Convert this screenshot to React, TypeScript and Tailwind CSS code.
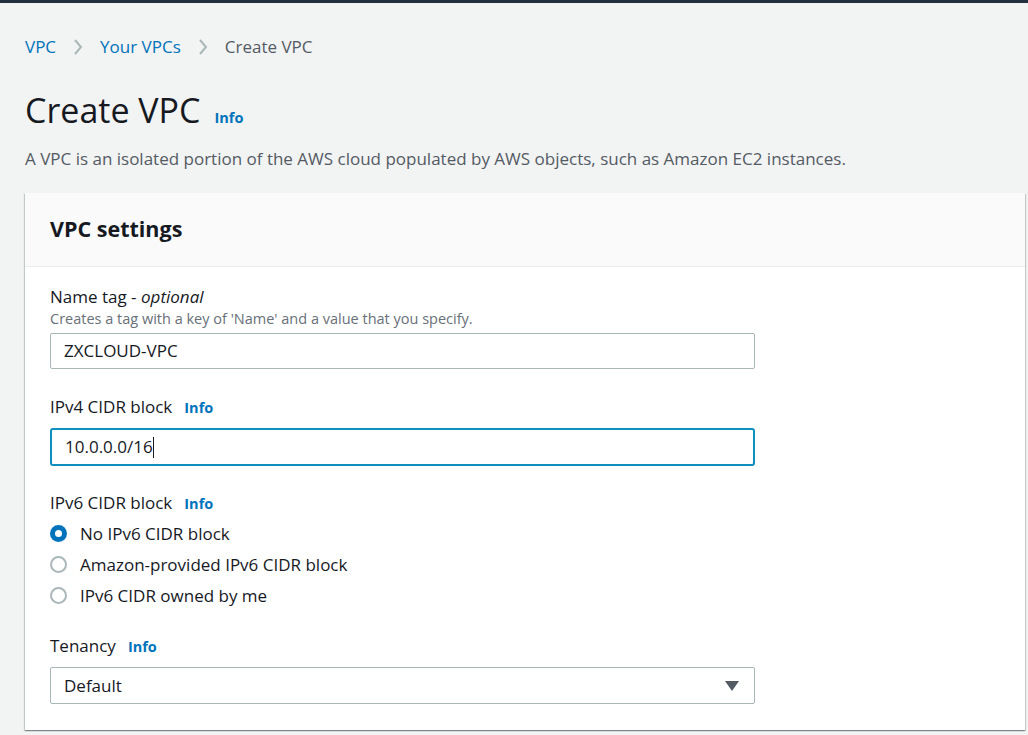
import React from 'react';

const InfoLink = ({ className = '' }: { className?: string }) => (
    <span className={`text-[14.5px] font-bold text-[#0073bb] ${className}`}>Info</span>
);

const Chevron = () => (
    <svg width="10" height="18" viewBox="0 0 10 18" className="mx-[17px]">
        <path d="M2 2 L8 9 L2 16" fill="none" stroke="#aab7b8" strokeWidth="2" />
    </svg>
);

const Radio = ({ checked, label }: { checked?: boolean; label: string }) => (
    <div className="flex items-center h-[31px]">
        {checked ? (
            <span className="w-[17px] h-[17px] rounded-full bg-[#0073bb] flex items-center justify-center">
                <span className="w-[7px] h-[7px] rounded-full bg-white" />
            </span>
        ) : (
            <span className="w-[17px] h-[17px] rounded-full border-2 border-[#aab7b8] bg-white" />
        )}
        <span className="ml-[13px] text-[17px] text-[#16191f]">{label}</span>
    </div>
);

export default function App() {
    return (
        <div className="min-h-screen bg-[#f2f3f3] text-[#16191f]" style={{ fontFamily: '"Open Sans", "Noto Sans", sans-serif' }}>
            {/* top nav strip */}
            <div className="h-[3px] bg-[#232f3e]" />

            <div className="pl-[25px] pr-[3px]">
                {/* Breadcrumbs */}
                <div className="flex items-center h-[24px] mt-[32px] text-[17px]">
                    <span className="text-[#0073bb]">VPC</span>
                    <Chevron />
                    <span className="text-[#0073bb]">Your VPCs</span>
                    <Chevron />
                    <span className="text-[#545b64]">Create VPC</span>
                </div>

                {/* Header */}
                <div className="flex items-baseline mt-[29px] h-[44px]">
                    <h1 className="text-[34px] leading-[44px] text-[#16191f]">Create VPC</h1>
                    <InfoLink className="ml-[14px]" />
                </div>
                <p className="mt-[15px] text-[17px] leading-[24px] text-[#545b64]">
                    A VPC is an isolated portion of the AWS cloud populated by AWS objects, such as Amazon EC2 instances.
                </p>

                {/* VPC settings card */}
                <div className="mt-[22px] bg-white shadow-[0_1px_1px_0_rgba(0,28,36,0.3),1px_1px_1px_0_rgba(0,28,36,0.15),-1px_1px_1px_0_rgba(0,28,36,0.15)]">
                    <div className="bg-[#fafafa] border-b border-[#eaeded] px-[25px] h-[74px] flex items-center">
                        <h2 className="text-[21.5px] font-bold text-[#16191f]">VPC settings</h2>
                    </div>

                    <div className="px-[25px] pt-[18px] pb-[26px] w-[755px]">
                        {/* Name tag */}
                        <div className="text-[17px] leading-[24px]">
                            Name tag - <i>optional</i>
                        </div>
                        <div className="text-[14.5px] leading-[20px] text-[#687078]">
                            Creates a tag with a key of 'Name' and a value that you specify.
                        </div>
                        <div className="mt-[4px] h-[36px] border border-[#aab7b8] rounded-[2px] bg-white flex items-center px-[13px] text-[17px]">
                            ZXCLOUD-VPC
                        </div>

                        {/* IPv4 */}
                        <div className="mt-[26px] flex items-baseline text-[17px] leading-[24px]">
                            <span>IPv4 CIDR block</span>
                            <InfoLink className="ml-[12px]" />
                        </div>
                        <div className="mt-[8px] h-[38px] border-2 border-[#0e8fbd] rounded-[3px] bg-white flex items-center px-[13px] text-[17px]">
                            10.0.0.0/16<span className="w-px h-[21px] bg-[#16191f]" />
                        </div>

                        {/* IPv6 */}
                        <div className="mt-[25px] flex items-baseline text-[17px] leading-[24px]">
                            <span>IPv6 CIDR block</span>
                            <InfoLink className="ml-[12px]" />
                        </div>
                        <div className="mt-[2px]">
                            <Radio checked label="No IPv6 CIDR block" />
                            <Radio label="Amazon-provided IPv6 CIDR block" />
                            <Radio label="IPv6 CIDR owned by me" />
                        </div>

                        {/* Tenancy */}
                        <div className="mt-[23px] flex items-baseline text-[17px] leading-[24px]">
                            <span>Tenancy</span>
                            <InfoLink className="ml-[12px]" />
                        </div>
                        <div className="mt-[8px] h-[37px] border border-[#aab7b8] rounded-[2px] bg-white flex items-center justify-between pl-[13px] pr-[15px] text-[17px]">
                            <span>Default</span>
                            <svg width="14" height="10" viewBox="0 0 14 10">
                                <path d="M0 0 H14 L7 10 Z" fill="#545b64" />
                            </svg>
                        </div>
                    </div>
                </div>
            </div>
        </div>
    );
}
